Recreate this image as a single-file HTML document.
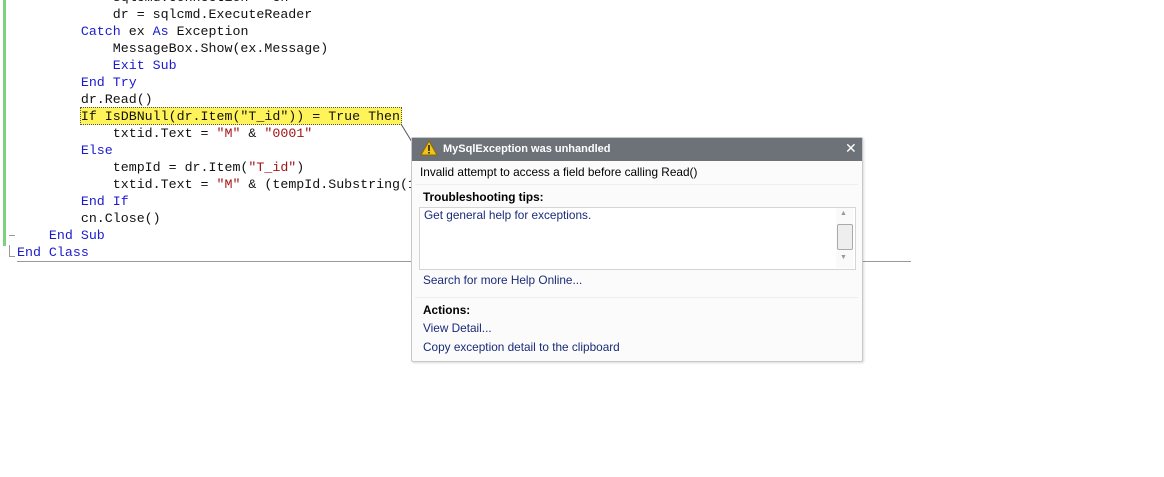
<!DOCTYPE html>
<html><head><style>
body{margin:0;width:1164px;height:477px;background:#fff;position:relative;overflow:hidden}
.c{position:absolute;font-family:"Liberation Mono",monospace;font-size:13.3px;line-height:17px;white-space:pre;color:#111}
.k{color:#1a1ad0}.s{color:#a31515}
.p{position:absolute;font-family:"Liberation Sans",sans-serif;font-size:11.8px;white-space:nowrap}
.l{color:#1a2b78}
</style></head><body>
<div style="position:absolute;left:3px;top:0;width:3px;height:246px;background:#7dd07d"></div>
<div style="position:absolute;left:9px;top:235px;width:6px;height:1px;background:#999"></div>
<div style="position:absolute;left:9px;top:245px;width:1px;height:12px;background:#999"></div>
<div style="position:absolute;left:9px;top:256px;width:6px;height:1px;background:#999"></div>
<div style="position:absolute;left:17px;top:261px;width:894px;height:1px;background:#999"></div>
<div style="position:absolute;left:80px;top:107px;width:320px;height:16px;background:#fff35a;border:1px dotted #555"></div>
<svg style="position:absolute;left:0;top:0" width="420" height="150"><line x1="401" y1="124" x2="412" y2="142" stroke="#555" stroke-width="1"/></svg>
<div class="c" style="left:17px;top:-11px">            sqlcmd.Connection = cn
            dr = sqlcmd.ExecuteReader
        <span class="k">Catch</span> ex <span class="k">As</span> Exception
            MessageBox.Show(ex.Message)
            <span class="k">Exit Sub</span>
        <span class="k">End Try</span>
        dr.Read()
        If IsDBNull(dr.Item("T_id")) = True Then
            txtid.Text = <span class="s">"M"</span> &amp; <span class="s">"0001"</span>
        <span class="k">Else</span>
            tempId = dr.Item(<span class="s">"T_id"</span>)
            txtid.Text = <span class="s">"M"</span> &amp; (tempId.Substring(1)
        <span class="k">End If</span>
        cn.Close()
    <span class="k">End Sub</span>
<span class="k">End Class</span></div>
<div style="position:absolute;left:411px;top:137px;width:450px;height:223px;background:#fbfbfb;border:1px solid #c8c8c8;border-radius:2px;box-shadow:1px 1px 2px rgba(0,0,0,.15)">
<div style="height:23px;background:#6d7178"></div>
</div>
<svg style="position:absolute;left:420px;top:140px" width="18" height="16"><path d="M9 1 L17 15 L1 15 Z" fill="#f2c318" stroke="#8a6a00" stroke-width="1"/><rect x="8.2" y="5" width="1.6" height="6" fill="#222"/><rect x="8.2" y="12" width="1.6" height="1.6" fill="#222"/></svg>
<div class="p" style="left:443px;top:143px;color:#fff;font-weight:bold;font-size:11px">MySqlException was unhandled</div>
<div class="p" style="left:845px;top:140px;color:#fff;font-size:14px">✕</div>
<div class="p" style="left:420px;top:165px;color:#000">Invalid attempt to access a field before calling Read()</div>
<div style="position:absolute;left:415px;top:184px;width:443px;height:1px;background:#eee"></div>
<div class="p" style="left:423px;top:190px;font-weight:bold;color:#000">Troubleshooting tips:</div>
<div style="position:absolute;left:419px;top:207px;width:435px;height:61px;background:#fff;border:1px solid #d5d5d5"></div>
<div class="p l" style="left:424px;top:208px">Get general help for exceptions.</div>
<div style="position:absolute;left:836px;top:208px;width:17px;height:60px;background:#fafafa"></div>
<div class="p" style="left:840px;top:210px;font-size:7px;color:#999">▲</div>
<div style="position:absolute;left:837px;top:224px;width:14px;height:24px;background:#eee;border:1px solid #aaa;border-radius:2px"></div>
<div class="p" style="left:840px;top:254px;font-size:7px;color:#999">▼</div>
<div class="p l" style="left:423px;top:273px">Search for more Help Online...</div>
<div style="position:absolute;left:415px;top:297px;width:443px;height:1px;background:#eee"></div>
<div class="p" style="left:423px;top:303px;font-weight:bold;color:#000">Actions:</div>
<div class="p l" style="left:423px;top:321px">View Detail...</div>
<div class="p l" style="left:423px;top:340px">Copy exception detail to the clipboard</div>
</body></html>
